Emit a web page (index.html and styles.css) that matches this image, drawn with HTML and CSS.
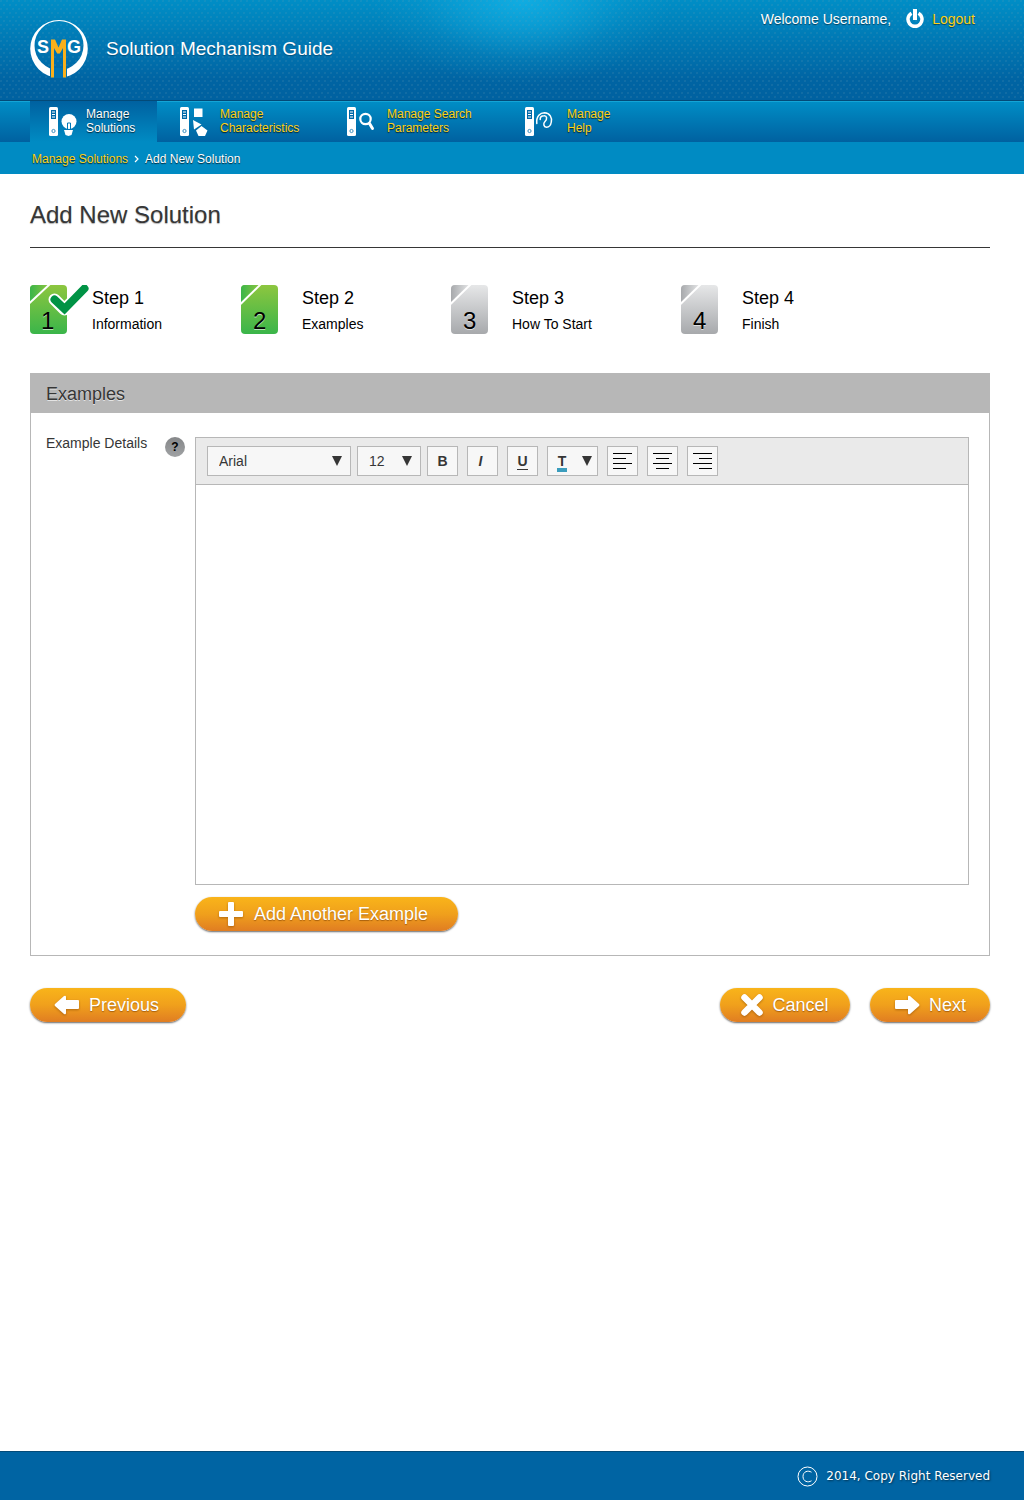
FILE: index.html
```html
<!DOCTYPE html>
<html lang="en">
<head>
<meta charset="utf-8">
<meta name="viewport" content="width=device-width, initial-scale=1">
<title>Add New Solution - Solution Mechanism Guide</title>
<link rel="stylesheet" href="styles.css">
</head>
<body>
<svg class="defs" width="0" height="0" aria-hidden="true">
  <defs>
    <linearGradient id="green" x1="0" y1="0" x2="0" y2="1"><stop offset="0" stop-color="#8dc63f"/><stop offset="1" stop-color="#3ab54a"/></linearGradient>
    <linearGradient id="green-fold" x1="0" y1="0" x2="1" y2="0"><stop offset="0" stop-color="#3ab54a"/><stop offset="1" stop-color="#8dc63f"/></linearGradient>
    <linearGradient id="gray" x1="0" y1="0" x2="0" y2="1"><stop offset="0" stop-color="#e6e7e8"/><stop offset="1" stop-color="#a7a9ac"/></linearGradient>
    <linearGradient id="gray-fold" x1="0" y1="0" x2="1" y2="0"><stop offset="0" stop-color="#a7a9ac"/><stop offset="1" stop-color="#e6e7e8"/></linearGradient>
    <symbol id="remote" viewBox="0 0 9 29">
      <rect width="9" height="29" rx="1.5" fill="#fff"/>
      <path d="M2 3h5v9H2z" fill="#0069a8"/>
      <path d="M3 5h3M3 7.500h3M3 10h3" stroke="#fff" stroke-width="1"/>
      <circle cx="4.500" cy="24" r="1.600" fill="none" stroke="#3a8fc0" stroke-width="1"/>
    </symbol>
  </defs>
</svg>

<header class="header">
  <div class="brand">
    <svg class="logo" viewBox="0 0 58 58" role="img" aria-label="SMG">
      <path fill="#fff" fill-rule="evenodd" d="M29 0a28.800 28.800 0 0 1 0 57.600a28.800 28.800 0 0 1 0-57.600zM29 1a24.500 24.500 0 0 0 0 49a24.500 24.500 0 0 0 0-49z"/>
      <path fill="#0072b2" d="M20 48h17v10H20z"/>
      <text class="logo-text" x="7" y="33" fill="#fff">S</text>
      <text class="logo-text" x="37" y="33" fill="#fff">G</text>
      <path fill="#f9b01b" d="M21 19.500h4l3.500 8 3.500-8h4V57.500h-3V28l-3.200 5.500h-2.600L24 28v29.500h-3z"/>
    </svg>
    <span class="brand-name">Solution Mechanism Guide</span>
  </div>
  <div class="account">
    <span>Welcome Username,</span>
    <a class="logout" href="#logout">
      <svg class="power" viewBox="0 0 18 20" aria-hidden="true"><path d="M5.500 4.200a7 7 0 1 0 7 0" fill="none" stroke="#fff" stroke-width="3.500"/><path d="M7 0h4v11H7z" fill="#fff"/></svg>
      <span>Logout</span>
    </a>
  </div>
</header>

<nav class="nav" aria-label="Main">
  <a class="nav-item active" href="#solutions" aria-current="page">
    <svg class="nav-icon" viewBox="0 -1 28 30" aria-hidden="true"><use href="#remote" width="9" height="29"/><circle cx="20" cy="14.500" r="7.500" fill="#fff"/><path d="M15 23h9l-1.500 5-3 1-3-1z" fill="#fff"/><path d="M15 22.500h10M18.500 22v-6h3v6" fill="none" stroke="#0079b8" stroke-width="1"/></svg>
    <span>Manage<br>Solutions</span>
  </a>
  <a class="nav-item" href="#characteristics">
    <svg class="nav-icon" viewBox="0 -1 28 30" aria-hidden="true"><use href="#remote" width="9" height="29"/><path fill="#fff" d="M14 1.500h8.500V10H14zM13 13l8.500 4.500-7.500 5zM21.500 19l6 4.500-2.500 5.500h-6.500L16 23.500z"/></svg>
    <span>Manage<br>Characteristics</span>
  </a>
  <a class="nav-item" href="#search">
    <svg class="nav-icon" viewBox="0 -1 28 30" aria-hidden="true"><use href="#remote" width="9" height="29"/><circle cx="18.500" cy="12" r="5.200" fill="none" stroke="#fff" stroke-width="2.200"/><path d="M22.500 16.500l3 5" stroke="#fff" stroke-width="3" stroke-linecap="round"/></svg>
    <span>Manage Search<br>Parameters</span>
  </a>
  <a class="nav-item help-item" href="#help">
    <svg class="nav-icon" viewBox="0 -1 28 30" aria-hidden="true"><use href="#remote" width="9" height="29"/><path fill="none" stroke="#fff" stroke-width="1.500" stroke-linecap="round" d="M11.800 16.500C11 9 15.500 5.800 19.500 5.800C25 6 27.200 10.500 26.300 15C25.800 18 24 20.200 21.500 20.200C18.500 20 18 16.500 20 14.500C22.500 12 22 8.500 19 8.700C16.500 8.700 15 10 15.200 12.500"/></svg>
    <span>Manage<br>Help</span>
  </a>
</nav>

<nav class="crumbs" aria-label="Breadcrumb">
  <a href="#solutions">Manage Solutions</a>
  <svg class="crumb-arrow" viewBox="0 0 5 8" aria-hidden="true"><path d="M1 1l3 3-3 3" fill="none" stroke="#fff" stroke-width="1.200"/></svg>
  <span>Add New Solution</span>
</nav>

<main class="main">
  <h1 class="title">Add New Solution</h1>

  <ol class="steps">
    <li class="step">
      <svg class="step-icon" viewBox="0 0 60 50" aria-hidden="true">
        <rect width="37" height="49" rx="4" fill="url(#green)"/><path d="M4 0h15L0 18V4q0-4 4-4z" fill="url(#green-fold)"/><path d="M-1 18.500L20 -1" stroke="#fff" stroke-width="2"/>
        <path d="M24.500 14.500l10 10L55 3.500" fill="none" stroke="#fff" stroke-width="12" stroke-linejoin="round" stroke-linecap="round"/>
        <path d="M24.500 14.500l10 9.500L54.500 3.500" fill="none" stroke="#009345" stroke-width="8" stroke-linecap="round"/>
        <text class="step-num" x="11" y="44">1</text>
      </svg>
      <div><h2>Step 1</h2><p>Information</p></div>
    </li>
    <li class="step">
      <svg class="step-icon" viewBox="0 0 60 50" aria-hidden="true">
        <rect x="1" width="37" height="49" rx="4" fill="url(#green)"/><path d="M5 0h15L1 18V4q0-4 4-4z" fill="url(#green-fold)"/><path d="M0 19.500L21 -1" stroke="#fff" stroke-width="2"/>
        <text class="step-num" x="13" y="44">2</text>
      </svg>
      <div><h2>Step 2</h2><p>Examples</p></div>
    </li>
    <li class="step">
      <svg class="step-icon" viewBox="0 0 60 50" aria-hidden="true">
        <rect x="1" width="37" height="49" rx="4" fill="url(#gray)"/><path d="M5 0h15L1 18V4q0-4 4-4z" fill="url(#gray-fold)"/><path d="M0 19.500L21 -1" stroke="#fff" stroke-width="2"/>
        <text class="step-num" x="13" y="44">3</text>
      </svg>
      <div><h2>Step 3</h2><p>How To Start</p></div>
    </li>
    <li class="step">
      <svg class="step-icon" viewBox="0 0 60 50" aria-hidden="true">
        <rect x="1" width="37" height="49" rx="4" fill="url(#gray)"/><path d="M5 0h15L1 18V4q0-4 4-4z" fill="url(#gray-fold)"/><path d="M0 19.500L21 -1" stroke="#fff" stroke-width="2"/>
        <text class="step-num" x="13" y="44">4</text>
      </svg>
      <div><h2>Step 4</h2><p>Finish</p></div>
    </li>
  </ol>

  <section class="panel">
    <h2 class="panel-title">Examples</h2>
    <div class="panel-body">
      <label class="field-label" for="details">Example Details</label>
      <button class="help" type="button" aria-label="Help">?</button>
      <div class="field">
        <div class="editor">
          <div class="toolbar">
            <div class="picker picker-font">
              <select aria-label="Font"><option>Arial</option></select>
              <svg class="caret" viewBox="0 0 10 10" aria-hidden="true"><path d="M0 0h10L5 10z"/></svg>
            </div>
            <div class="picker picker-size">
              <select aria-label="Font size"><option>12</option></select>
              <svg class="caret" viewBox="0 0 10 10" aria-hidden="true"><path d="M0 0h10L5 10z"/></svg>
            </div>
            <div class="tools">
              <button class="tool" type="button" aria-label="Bold">B</button>
              <button class="tool italic" type="button" aria-label="Italic">I</button>
              <button class="tool underline" type="button" aria-label="Underline"><span>U</span></button>
              <button class="tool color" type="button" aria-label="Text color"><span>T</span><svg class="caret" viewBox="0 0 10 10" aria-hidden="true"><path d="M0 0h10L5 10z"/></svg></button>
              <button class="tool" type="button" aria-label="Align left"><svg class="align" viewBox="0 0 19 17" aria-hidden="true"><path d="M0 .5h19M0 5.500h13M0 10.500h19M0 15.500h13"/></svg></button>
              <button class="tool" type="button" aria-label="Align center"><svg class="align" viewBox="0 0 19 17" aria-hidden="true"><path d="M0 .5h19M3 5.500h13M0 10.500h19M3 15.500h13"/></svg></button>
              <button class="tool" type="button" aria-label="Align right"><svg class="align" viewBox="0 0 19 17" aria-hidden="true"><path d="M0 .5h19M6 5.500h13M0 10.500h19M6 15.500h13"/></svg></button>
            </div>
          </div>
          <textarea class="text" id="details"></textarea>
        </div>
        <button class="button add" type="button">
          <svg class="plus" viewBox="0 0 24 24" aria-hidden="true"><path d="M10 0h4q1 0 1 1v8h8q1 0 1 1v4q0 1-1 1h-8v8q0 1-1 1h-4q-1 0-1-1v-8H1q-1 0-1-1v-4q0-1 1-1h8V1q0-1 1-1z" fill="#fff"/></svg>
          Add Another Example
        </button>
      </div>
    </div>
  </section>

  <div class="actions">
    <button class="button previous" type="button">
      <svg class="arrow" viewBox="0 0 26 20" aria-hidden="true"><path d="M1 9L10 1q2-1 2 1v3h12q1 0 1 1v7q0 1-1 1H12v4q0 2-2 1L1 11q-1-1 0-2z" fill="#fff"/></svg>
      Previous
    </button>
    <button class="button cancel" type="button">
      <svg class="cross" viewBox="0 0 22 22" aria-hidden="true"><path d="M3.500 3.500l15 15M18.500 3.500l-15 15" stroke="#fff" stroke-width="6.500" stroke-linecap="round"/></svg>
      Cancel
    </button>
    <button class="button next" type="button">
      <svg class="arrow" viewBox="0 0 26 20" aria-hidden="true"><path d="M25 9L16 1q-2-1-2 1v3H2Q1 5 1 6v7q0 1 1 1h12v4q0 2 2 1L25 11q1-1 0-2z" fill="#fff"/></svg>
      Next
    </button>
  </div>
</main>

<footer class="footer">
  <svg class="copyright" viewBox="0 0 21 21" role="img" aria-label="Copyright"><circle cx="10.500" cy="10.500" r="9.500"/><path d="M14.500 6.200C11 4 6 5.500 6 10.500S11 17 14.500 14.800"/></svg>
  <span>2014, Copy Right Reserved</span>
</footer>
</body>
</html>
```
FILE: styles.css
```css
*,
*::before,
*::after {
  box-sizing: border-box;
}

body {
  margin: 0;
  min-height: 100vh;
  display: flex;
  flex-direction: column;
  background: #fff;
  color: #363636;
  font: 14px/16px "Liberation Sans", Arial, sans-serif;
}

h1, h2, p, ol {
  margin: 0;
  padding: 0;
  font-weight: normal;
}

a {
  color: #fcd116;
  text-decoration: none;
}

button, select, textarea {
  margin: 0;
  font: inherit;
  color: inherit;
}

svg {
  display: block;
  flex: none;
}

.defs {
  position: absolute;
}

/* Header */
.header {
  display: flex;
  justify-content: space-between;
  padding: 0 49px 22px 30px;
  border-bottom: 1px solid #034a78;
  color: #fff;
  background:
    radial-gradient(circle at 1px 1px, rgba(110, 160, 180, .16) 0 1px, transparent 1px) 0 0 / 6px 8px,
    radial-gradient(circle at 1px 1px, rgba(110, 160, 180, .16) 0 1px, transparent 1px) 3px 4px / 6px 8px,
    radial-gradient(ellipse 150px 85px at 51% 0, rgba(20, 180, 232, .8), rgba(20, 180, 232, .5) 35%, rgba(20, 180, 232, .15) 70%, rgba(20, 180, 232, 0)),
    linear-gradient(#008ec6, #0064a3 80%, #0061a0);
}

.brand {
  display: flex;
  align-items: center;
  gap: 18px;
  padding-top: 20px;
}

.logo {
  width: 58px;
  height: 58px;
}

.logo-text {
  font: bold 18px "Liberation Sans", Arial, sans-serif;
}

.brand-name {
  font-size: 19px;
  line-height: 24px;
  text-shadow: 0 1px 1px rgba(0, 0, 0, .3);
}

.account,
.logout {
  display: flex;
  align-items: center;
}

.account {
  align-self: flex-start;
  gap: 15px;
  padding-top: 9px;
  text-shadow: 0 1px 1px rgba(0, 0, 0, .5);
}

.logout {
  gap: 8px;
}

.power {
  width: 18px;
  height: 20px;
}

/* Main navigation */
.nav {
  display: grid;
  grid-template-columns: 127px 167px 178px auto;
  justify-content: start;
  padding-left: 30px;
  background: linear-gradient(#008ec6, #0061a0);
  box-shadow: inset 0 1px #14a4d6;
  font-size: 12px;
  line-height: 14px;
}

.nav-item {
  display: flex;
  align-items: center;
  gap: 12px;
  padding: 5px 0 6px 23px;
  text-shadow: 0 1px 1px rgba(0, 0, 0, .7);
}

.nav-item.active {
  gap: 9px;
  padding-left: 19px;
  color: #fff;
  background: linear-gradient(#0061a0, #008bc3);
}

.nav-item.help-item {
  gap: 14px;
}

.nav-icon {
  width: 28px;
  height: 30px;
}

.crumbs {
  display: flex;
  align-items: center;
  gap: 6px;
  height: 32px;
  padding: 2px 32px 0;
  background: #008bc3;
  color: #fff;
  font-size: 12px;
  text-shadow: 0 1px 1px rgba(0, 0, 0, .7);
}

.crumb-arrow {
  width: 5px;
  height: 8px;
}

/* Content */
.main {
  flex: 1;
  padding: 25px 34px 40px 30px;
}

.title {
  padding-bottom: 16px;
  border-bottom: 1px solid #363636;
  font-size: 24px;
  line-height: 32px;
  text-shadow: 0 1px 1px rgba(0, 0, 0, .3);
}

.steps {
  display: grid;
  grid-template-columns: 21fr 21fr 23fr 31fr;
  margin-top: 37px;
  list-style: none;
  color: #000;
}

.step {
  display: flex;
  gap: 2px;
}

.step-icon {
  width: 60px;
  height: 50px;
}

.step-num {
  font: 24px "Liberation Sans", Arial, sans-serif;
  text-shadow: 0 1px rgba(255, 255, 255, .6);
}

.step h2 {
  padding: 2px 0 6px;
  font-size: 18px;
  line-height: 22px;
}

.step p {
  line-height: 18px;
}

.panel {
  margin-top: 38px;
  border: 1px solid #b7b7b7;
}

.panel-title {
  padding: 10px 15px 8px;
  background: #b7b7b7;
  font-size: 18px;
  line-height: 21px;
  text-shadow: 0 1px #e4e4e4;
}

.panel-body {
  display: grid;
  grid-template-columns: 119px 30px 1fr;
  align-items: start;
  padding: 24px 20px 24px 15px;
}

.field-label {
  line-height: 12px;
}

.help {
  width: 20px;
  height: 20px;
  padding: 0;
  border: 0;
  border-radius: 50%;
  background: linear-gradient(#858789, #a0a2a4);
  color: #000;
  font-size: 12px;
  font-weight: bold;
  line-height: 20px;
}

.editor {
  border: 1px solid #b7b7b7;
}

.toolbar {
  display: flex;
  flex-wrap: wrap;
  gap: 6px;
  padding: 8px 11px;
  border-bottom: 1px solid #b7b7b7;
  background: #eaeaea;
}

.picker {
  display: grid;
  align-items: center;
}

.picker-font {
  width: 144px;
}

.picker-size {
  width: 64px;
}

.picker > * {
  grid-area: 1 / 1;
}

.picker select {
  width: 100%;
  height: 30px;
  padding: 0 11px;
  appearance: none;
  border: 1px solid #b7b7b7;
  border-radius: 0;
  background: #f7f7f7;
}

.picker .caret {
  justify-self: end;
  margin-right: 9px;
  pointer-events: none;
}

.caret {
  width: 10px;
  height: 10px;
  fill: #363636;
}

.tools {
  display: flex;
  flex-wrap: wrap;
  gap: 9px;
}

.tool {
  display: flex;
  align-items: center;
  justify-content: center;
  width: 31px;
  height: 30px;
  padding: 0;
  border: 1px solid #b7b7b7;
  background: #f7f7f7;
  font-weight: bold;
}

.tool.italic {
  padding-right: 4px;
  font-style: italic;
}

.underline span {
  padding-top: 2px;
  border-bottom: 1px solid #363636;
  line-height: 15px;
}

.tool.color {
  justify-content: space-between;
  width: 51px;
  padding: 0 5px 0 9px;
}

.color span {
  width: 10px;
  margin-top: 4px;
  border-bottom: 4px solid #3b9dbd;
  line-height: 14px;
}

.align {
  width: 19px;
  height: 17px;
  stroke: #000;
}

.text {
  display: block;
  width: 100%;
  height: 399px;
  padding: 11px;
  border: 0;
  resize: none;
}

/* Pill buttons */
.button {
  display: flex;
  align-items: center;
  justify-content: center;
  height: 34px;
  padding: 0;
  border: 0;
  border-radius: 17px;
  background: linear-gradient(#f9b41a, #f0a01c 50%, #e07d22);
  box-shadow: 0 1px 2px rgba(0, 0, 0, .6);
  color: #fff;
  font-size: 18px;
  line-height: 22px;
  text-shadow: 0 1px 1px rgba(120, 60, 0, .6);
}

.button svg {
  filter: drop-shadow(0 1px 1px rgba(120, 60, 0, .5));
}

.add {
  gap: 11px;
  width: 263px;
  margin-top: 12px;
  padding-right: 6px;
}

.previous {
  gap: 9px;
  width: 156px;
  margin-right: auto;
  padding-right: 3px;
}

.cancel {
  gap: 9px;
  width: 130px;
}

.next {
  gap: 9px;
  width: 120px;
}

.plus {
  width: 24px;
  height: 24px;
}

.arrow {
  width: 26px;
  height: 20px;
}

.cross {
  width: 22px;
  height: 22px;
}

.actions {
  display: flex;
  flex-wrap: wrap;
  gap: 20px;
  margin-top: 32px;
}

/* Footer */
.footer {
  display: flex;
  align-items: center;
  justify-content: flex-end;
  gap: 8px;
  height: 49px;
  padding: 0 34px;
  border-top: 1px solid #034a78;
  background: #0064a3;
  color: #fff;
  font: 12px/16px "DejaVu Sans", Verdana, sans-serif;
  text-shadow: 1px 1px 2px rgba(0, 0, 0, .5);
}

.copyright {
  width: 21px;
  height: 21px;
  fill: none;
  stroke: #fff;
}
```
